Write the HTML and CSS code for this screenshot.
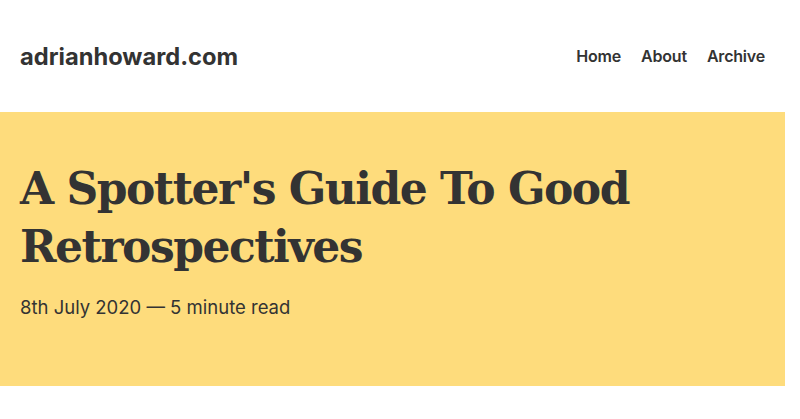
FILE: index.html
```html
<!DOCTYPE html>
<html lang="en">
<head>
<meta charset="utf-8">
<title>A Spotter's Guide To Good Retrospectives</title>
<link rel="stylesheet" href="styles.css">
</head>
<body>
<div class="page">
  <header class="site-header">
    <a class="logo" href="#">adrianhoward.com</a>
    <nav class="nav">
      <a href="#">Home</a>
      <a href="#">About</a>
      <a href="#">Archive</a>
    </nav>
  </header>
  <section class="hero">
    <h1 class="title">A Spotter's Guide To Good Retrospectives</h1>
    <p class="meta">8th July 2020 — 5 minute read</p>
  </section>
</div>
</body>
</html>
```
FILE: styles.css
```css
html, body {
  margin: 0;
  padding: 0;
  background: #fff;
}
body {
  font-family: Inter, "Noto Sans", sans-serif;
  color: #333;
}
.page {
  width: 785px;
}
.site-header {
  height: 112px;
  box-sizing: border-box;
  padding: 0 20px;
  display: flex;
  align-items: center;
  justify-content: space-between;
}
.logo {
  font-size: 23.7px;
  font-weight: 700;
  color: #333;
  text-decoration: none;
}
.nav {
  display: flex;
  gap: 20px;
}
.nav a {
  font-size: 16px;
  font-weight: 600;
  color: #333;
  text-decoration: none;
  letter-spacing: -0.2px;
}
.hero {
  background: #fedc7c;
  padding: 48px 20px 65px;
}
.title {
  margin: 0;
  font-family: "DejaVu Serif", serif;
  font-weight: 700;
  font-size: 44px;
  line-height: 58px;
  max-width: 640px;
  letter-spacing: -1.5px;
}
.meta {
  margin: 18px 0 0;
  font-size: 18.5px;
  line-height: 27px;
}
```
